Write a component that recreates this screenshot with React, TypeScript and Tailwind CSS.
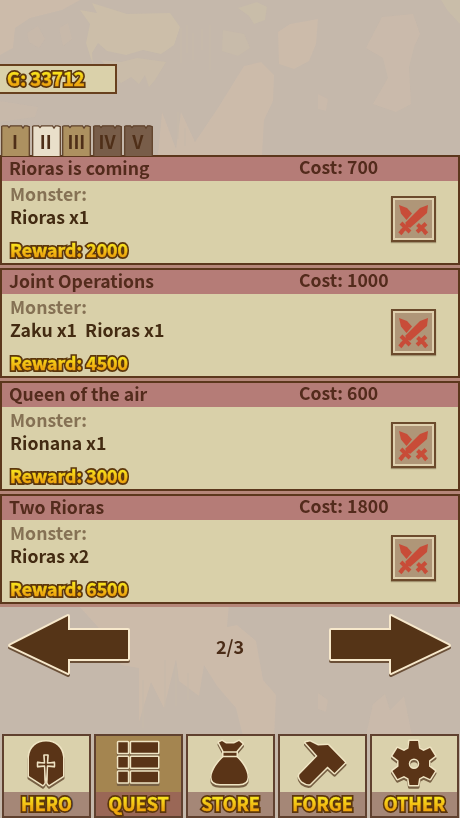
import type { ReactNode } from "react";

const quests = [
  { title: "Rioras is coming", cost: 700, monsters: "Rioras x1", reward: 2000 },
  { title: "Joint Operations", cost: 1000, monsters: "Zaku x1  Rioras x1", reward: 4500 },
  { title: "Queen of the air", cost: 600, monsters: "Rionana x1", reward: 3000 },
  { title: "Two Rioras", cost: 1800, monsters: "Rioras x2", reward: 6500 },
];

const tabs = [
  { label: "I", fill: "#ad9160" },
  { label: "II", fill: "#e9dfca" },
  { label: "III", fill: "#ad9160" },
  { label: "IV", fill: "#785d49" },
  { label: "V", fill: "#785d49" },
];

function GoldText({ text, className = "" }: { text: string; className?: string }) {
  return (
    <span
      data-text={text}
      className={`relative inline-block whitespace-pre text-[#5c360c] [-webkit-text-stroke:3.8px_#5c360c] [paint-order:stroke_fill] [stroke-linejoin:round] after:absolute after:inset-0 after:bg-linear-to-b after:from-[#f8e01c] after:from-30% after:to-[#efa80f] after:to-75% after:bg-clip-text after:text-transparent after:[-webkit-text-stroke:0.6px_transparent] after:content-[attr(data-text)] ${className}`}
    >
      {text}
    </span>
  );
}

function Parchment() {
  return (
    <svg className="absolute inset-0 -z-10" width="460" height="818" viewBox="0 0 460 818">
      <rect width="460" height="818" fill="#c5b8ab" />
      <g fill="#cebcab" opacity=".8">
        <path d="M0 0H80L62 10 30 18 15 28 13 48 0 55Z" />
        <path d="M278 32 290 24 318 19 316 44 309 61 294 69 279 64Z" />
        <path d="M382 17 413 14 420 34 414 47 409 67 411 104 396 112 373 104 388 78 383 58 366 48Z" opacity=".7" />
        <path d="M244 66 261 62 274 75 273 101 264 120 262 155H158L162 112 176 149 181 112 195 142 218 108Z" />
        <path d="M27 33 38 26 45 39 39 48 29 42ZM59 28 68 23 72 39 63 46Z" opacity=".5" />
        <path d="M0 101 38 107 35 117 0 122Z" opacity=".5" />
        <path d="M77 604H229L227 627 237 625 256 641 263 680 276 695 274 740H244L236 708 217 686 204 665 199 696 179 681 176 659 164 708 151 682 139 722 139 668 121 665 98 627Z" />
        <path d="M373 704 385 694 390 710 404 696 412 735H366Z" opacity=".6" />
        <path d="M27 640 38 632 46 642 39 652 24 650Z" opacity=".4" />
        <path d="M318 693 328 700 326 712 318 709Z" opacity=".6" />
        <path d="M318 94 328 99 326 111 318 109Z" opacity=".6" />
      </g>
      <g fill="#ccbfa8">
        <path d="M80 10 97 13 92 3 127 14 170 13 180 27 174 45 161 54 143 50 126 55 107 51 98 43 92 53 93 65 86 43 90 24Z" opacity=".9" />
        <path d="M101 60 121 62 137 58 166 62 155 80 149 87 145 75 139 84 131 77 121 83Z" opacity=".65" />
        <path d="M238 8 257 2 267 7 265 20 254 24 249 16ZM441 0H460V24L447 10Z" opacity=".6" />
        <path d="M223 30 244 34 250 48 238 56 222 51Z" opacity=".45" />
      </g>
      <g stroke="#c6b9ab" strokeWidth="2" opacity=".6">
        <path d="M181 28V63M187 25V53M193 33V60M202 29V50M210 25V70M178 112V139M185 128V146M165 660V706M176 666V706M188 673V700M143 680V728" />
      </g>
    </svg>
  );
}

function Tab({ label, fill }: { label: string; fill: string }) {
  return (
    <div className="relative isolate flex h-[31px] w-[29px] items-center justify-center pt-px pr-px text-[18px] leading-none text-[#4f2f18]">
      <svg className="absolute inset-0 -z-10" width="29" height="31" viewBox="0 0 29 31">
        <path d="M.7 31V1.5L2 .8H6.5L8 2.5 9.5.8H20.5L22 3 23.5.8H26L28.3 1.7V31" fill={fill} stroke="#60422b" strokeWidth="1.3" />
      </svg>
      {label}
    </div>
  );
}

function SwordsButton() {
  return (
    <button className="flex h-[46px] w-[45px] items-center justify-center border-2 border-[#6b4a2c] bg-[#dfd0ae] shadow-[0_1px_1px_#a0906e]">
      <svg width="37" height="38" viewBox="0 0 37 38">
        <rect width="37" height="38" fill="#af9678" />
        <g fill="#c84c38">
          <path d="M4 5 12 8 17 13.5 11.5 20 6 13.5Z" />
          <path d="M33 5 25 8 10 23 15 28 32 13Z" />
        </g>
        <g stroke="#c84c38" fill="none">
          <path d="M6 23 15 32M13 25 6.5 31.5M31 23.5 22 32M22.5 24.5 30 31.5" strokeWidth="4" />
          <path d="M4.5 31 7.5 34M29 34 32 31" strokeWidth="3.4" />
        </g>
      </svg>
    </button>
  );
}

function QuestCard({ title, cost, monsters, reward }: (typeof quests)[number]) {
  return (
    <article className="flex h-[110px] flex-col border-2 border-[#5c371c] bg-[#d9d0a9]">
      <header className="flex h-6 shrink-0 bg-[#b57c77] text-[17.6px] leading-5 text-[#532b1c]">
        <h2 className="w-[290px] pt-px pl-[7px]">{title}</h2>
        <p className="pl-[7px]">Cost: {cost}</p>
      </header>
      <div className="flex flex-1 pl-2">
        <div className="flex w-[381px] flex-col pt-px text-[17.7px] leading-[23px]">
          <p className="text-[#857154]">Monster:</p>
          <p className="whitespace-pre text-[#432b12]">{monsters}</p>
          <p className="mt-[10px]">
            <GoldText text={`Reward: ${reward}`} />
          </p>
        </div>
        <div className="pt-[15px]">
          <SwordsButton />
        </div>
      </div>
    </article>
  );
}

function Arrow({ flip = false }: { flip?: boolean }) {
  const d = flip
    ? "M2 17H62V3L120 32.5 62 60V46H2Z"
    : "M121 17H61V3L3 32.5 61 60V46H121Z";
  return (
    <button>
      <svg width="124" height="66" viewBox="0 0 124 66" strokeLinejoin="round">
        <path d={d} transform="translate(0 2)" fill="#6b5038" stroke="#6b5038" strokeWidth="4" />
        <path d={d} fill="#553417" stroke="#f7e8cb" strokeWidth="4" />
        <path d={d} fill="#553417" />
      </svg>
    </button>
  );
}

// Each icon is drawn three times: offset shadow, cream rim, dark body.
function StampedIcon({ d, line }: { d: string; line?: ReactNode }) {
  return (
    <svg width="56" height="54" viewBox="0 0 56 54" strokeLinejoin="round" fillRule="evenodd">
      <path d={d} transform="translate(0 2.2)" fill="#776044" stroke="#776044" strokeWidth="3" />
      <path d={d} fill="#5a3417" stroke="#f0e5c4" strokeWidth="3" />
      <path d={d} fill="#5a3417" />
      {line}
    </svg>
  );
}

const gear =
  "M23.5 5H32L33 12.5 37.5 15 44 12 49 20 43 24.5V30.5L49 35 44 43 37.5 40 33 42.5 32 49H23.5L22.5 42.5 18 40 11.5 43 6.5 35 12.5 30.5V24.5L6.5 20 11.5 12 18 15 22.5 12.5ZM28 22.5A5.2 5.2 0 1 0 28 33A5.2 5.2 0 1 0 28 22.5Z";

const nav: { label: string; icon: ReactNode }[] = [
  {
    label: "HERO",
    icon: (
      <StampedIcon
        d="M11 40V21C12 11 19 5.5 28 5.5S44 11 45 21V40L31 49 29.6 47V31L37 31.5V25.5L30 26.3 30.5 19H25.5L26 26.3 19 25.5V31.5L26.4 31V47L25 49Z"
        line={<path d="M26 19H30L29.5 27 36.5 26.5V30.5L29.5 30 28.7 44H27.3L26.5 30 19.5 30.5V26.5L26.5 27Z" fill="#5a3417" stroke="#eee1c2" strokeWidth="1.5" />}
      />
    ),
  },
  {
    label: "QUEST",
    icon: <StampedIcon d="M8.3 6.3H17.8V16.8H8.3ZM21.2 6.3H48V16.8H21.2ZM8.3 21H17.8V31.5H8.3ZM21.2 21H48V31.5H21.2ZM8.3 35.8H17.8V46.3H8.3ZM21.2 35.8H48V46.3H21.2Z" />,
  },
  {
    label: "STORE",
    icon: (
      <StampedIcon
        d="M17 6.5 20 5 24 7.5 32 7.5 37 5 40.5 8 34.5 15V21C40 26 45.5 34 45.5 41Q45.5 48 37 48H18Q9.5 48 9.5 41C10 34 16 26 21.5 21V15Z"
        line={<path d="M20.5 16H35.5M20.5 20.5H35.5" stroke="#f0e5c4" strokeWidth="1.7" />}
      />
    ),
  },
  {
    label: "FORGE",
    icon: <StampedIcon d="M11.5 6.5 16 5.5 24 9.5 34 9 51 26.5 40.5 37 33.5 30.5 16 48Q13 49 8 45.5 4 41 5.5 38.5L23.5 20Z" />,
  },
  { label: "OTHER", icon: <StampedIcon d={gear} /> },
];

export default function App() {
  return (
    <div className="relative isolate flex h-[818px] w-[460px] flex-col overflow-hidden font-['Noto_Sans_CJK_SC','Noto_Sans',sans-serif] font-bold">
      <Parchment />
      <div className="mt-16 flex h-[30px] w-[117px] items-center border-2 border-l-0 border-[#68401e] bg-[#dad1aa] pl-[7px] text-[18.4px] leading-6">
        <GoldText text="G: 33712" className="-top-[1.5px]" />
      </div>
      <nav className="mt-[31px] flex gap-[1.7px] pl-px">
        {tabs.map((t) => (
          <Tab key={t.label} {...t} />
        ))}
      </nav>
      <main className="-mt-px flex h-[452px] shrink-0 flex-col gap-[3px] bg-[#b58679]">
        {quests.map((q) => (
          <QuestCard key={q.title} {...q} />
        ))}
      </main>
      <div className="mt-[6px] flex h-[66px] shrink-0 items-center justify-between px-[7px] text-[18px] text-[#4b2c17]">
        <Arrow />
        <span>2/3</span>
        <Arrow flip />
      </div>
      <footer className="mt-auto flex h-[84px] shrink-0 gap-[3px] pl-[2px]">
        {nav.map(({ label, icon }) => {
          const active = label === "QUEST";
          return (
            <button
              key={label}
              className={`flex h-[84px] w-[89px] shrink-0 flex-col items-center border-2 border-[#60412f] ${active ? "bg-[#a48550]" : "bg-[#dad1ac]"}`}
            >
              <span className="flex h-[56px] shrink-0 items-start pr-[2px]">{icon}</span>
              <span
                className={`flex h-6 w-full items-center justify-center text-[18px] leading-6 ${active ? "bg-[#9a6756]" : "bg-[#a58777]"}`}
              >
                <GoldText text={label} className="-top-[1.5px]" />
              </span>
            </button>
          );
        })}
      </footer>
    </div>
  );
}
